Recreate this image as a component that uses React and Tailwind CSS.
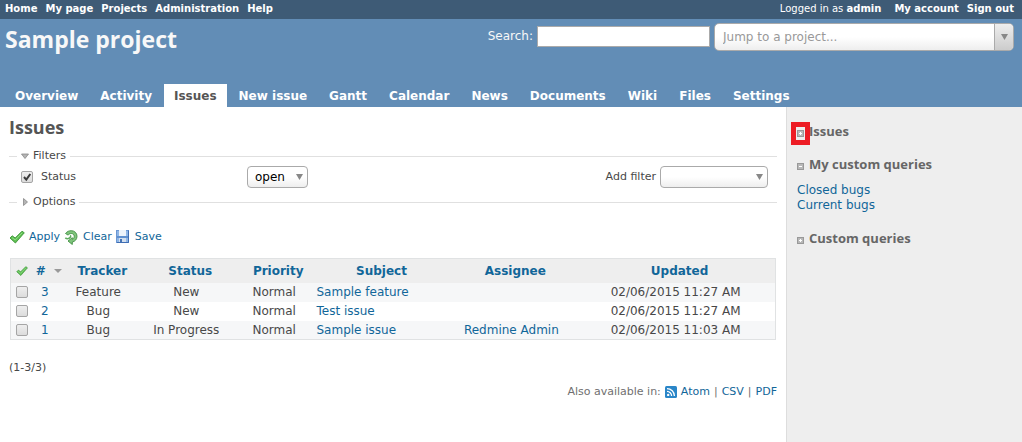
import React, { useState } from "react";

const topLinks = ["Home", "My page", "Projects", "Administration", "Help"];
const tabs = [
  "Overview", "Activity", "Issues", "New issue", "Gantt", "Calendar",
  "News", "Documents", "Wiki", "Files", "Settings",
];
const issues = [
  { id: 3, tracker: "Feature", status: "New", subject: "Sample feature", assignee: "", updated: "02/06/2015 11:27 AM" },
  { id: 2, tracker: "Bug", status: "New", subject: "Test issue", assignee: "", updated: "02/06/2015 11:27 AM" },
  { id: 1, tracker: "Bug", status: "In Progress", subject: "Sample issue", assignee: "Redmine Admin", updated: "02/06/2015 11:03 AM" },
];

function CheckMark({ className }) {
  return (
    <svg viewBox="0 0 16 16" className={className} aria-hidden="true">
      <path d="M1 9 3.2 6.800l3 2.200L13 2.200l2.300 1.600L6.400 14z" fill="#5fc052" stroke="#3c9438" strokeWidth="0.9" strokeLinejoin="round" />
      <path d="M3 8.600l3.200 2.400 7-7.200" fill="none" stroke="#97dc8d" strokeWidth="0.9" />
    </svg>
  );
}

function ReloadIcon() {
  return (
    <svg viewBox="0 0 16 16" className="size-4 shrink-0" aria-hidden="true">
      <path d="M2.500 4.500C4 2.500 6 1.700 8.200 1.700c3.500 0 5.800 2.500 5.800 5.600 0 3-2 5.200-4.700 5.700v2.500L5 12l4.300-3.300v1.600c1.200-.4 1.900-1.500 1.900-2.900 0-1.700-1.300-2.900-3-2.900-1.300 0-2.300.5-3 1.600z" fill="#7fc47c" stroke="#3f8f42" strokeWidth="0.9" strokeLinejoin="round" />
      <path d="M2.300 8.800c1.400 1.300 3.700 1.100 4.800-.2.700-.8.600-1.800 0-2.100" fill="none" stroke="#5fac60" strokeWidth="1.600" />
    </svg>
  );
}

function SaveIcon() {
  return (
    <svg viewBox="0 0 16 16" className="size-4 shrink-0" aria-hidden="true">
      <rect x="1.5" y="1.5" width="12" height="12" fill="#8fb6e6" stroke="#6b97d3" />
      <path d="M13.500 1.500v12H2" fill="none" stroke="#3f6db3" />
      <rect x="4" y="1" width="7" height="6" fill="#edf3fb" />
      <rect x="2" y="7" width="11" height="2" fill="#5f90d0" />
      <rect x="4" y="9" width="7" height="4" fill="#d3dfee" />
      <rect x="5" y="10" width="2" height="3" fill="#4674b5" />
    </svg>
  );
}

function FeedIcon() {
  return (
    <svg viewBox="0 0 12 12" className="size-3 shrink-0" aria-hidden="true">
      <rect width="12" height="12" rx="1.5" fill="#2a86c8" />
      <circle cx="3.200" cy="8.900" r="1.200" fill="#fff" />
      <path d="M2 5.400A4.600 4.600 0 0 1 6.600 10M2 2.600A7.400 7.400 0 0 1 9.400 10" fill="none" stroke="#fff" strokeWidth="1.300" />
    </svg>
  );
}

function ToggleBox({ plus }) {
  return (
    <svg viewBox="0 0 7 7" className="mt-1 size-[7px] shrink-0" aria-hidden="true">
      <rect x="0.5" y="0.5" width="6" height="6" fill="#b8b8b8" stroke="#999" />
      <path d={plus ? "M2 3.5h3M3.5 2v3" : "M2 3.5h3"} stroke="#fff" strokeWidth="1" />
    </svg>
  );
}

function DownArrow({ className }) {
  return (
    <svg viewBox="0 0 8 6" preserveAspectRatio="none" className={className} aria-hidden="true">
      <path d="M0 0h8L4 6z" fill="currentColor" />
    </svg>
  );
}

function Dropdown({ label, options, className }) {
  return (
    <span className={`relative inline-flex ${className}`}>
      <select
        aria-label={label}
        className="h-[22px] w-full appearance-none rounded border border-[#aaa] bg-linear-to-b from-white from-50% to-[#eee] pl-[7px] text-xs text-black"
      >
        {options.map((o) => <option key={o}>{o}</option>)}
      </select>
      <DownArrow className="pointer-events-none absolute top-2 right-[5px] h-[6px] w-[7px] text-[#888]" />
    </span>
  );
}

function Section({ title, open, onToggle, children }) {
  return (
    <fieldset className="border-t border-[#e0e0e0] pl-2">
      <legend className="px-1 text-[11px] leading-[14px]">
        <button type="button" aria-expanded={open} onClick={onToggle} className="flex items-center gap-1">
          <svg viewBox="0 0 8 8" className="size-2" aria-hidden="true">
            <path d={open ? "M0.5 2h7L4 6.500z" : "M2.500 0.500v7L6.500 4z"} fill="#b5b5b5" stroke="#888" strokeWidth="0.8" />
          </svg>
          {title}
        </button>
      </legend>
      {children}
    </fieldset>
  );
}

function SideHeading({ title, open, marked, onToggle }) {
  return (
    <h3 className="font-['Open_Sans',sans-serif] text-[13px] leading-4 font-bold text-[#666]">
      <button type="button" aria-expanded={open} onClick={onToggle} className="relative flex items-center gap-[5px]">
        <ToggleBox plus={!open} />
        {title}
        {marked && <span className="pointer-events-none absolute -top-px -left-1.5 h-[23px] w-[19px] border-5 border-[#ed1c24]" />}
      </button>
    </h3>
  );
}

const link = "text-[#169] hover:underline";
const box = "size-3 appearance-none rounded-xs border border-[#a5a5a5] bg-linear-to-b from-[#eee] to-[#dcdcdc]";

export default function App() {
  const [filters, setFilters] = useState(true);
  const [options, setOptions] = useState(false);
  const [issuesOpen, setIssuesOpen] = useState(false);
  const [mine, setMine] = useState(true);
  const [custom, setCustom] = useState(false);

  return (
    <div className="flex min-h-screen flex-col bg-white font-['DejaVu_Sans',Verdana,sans-serif] text-xs text-[#484848]">
      <div className="flex h-[19px] items-start justify-between bg-[#3e5b76] pr-2 pl-[5px] text-[10px] leading-[18px] font-bold text-white">
        <nav aria-label="Site" className="flex gap-2">
          {topLinks.map((t) => <a key={t} href="#">{t}</a>)}
        </nav>
        <div className="flex gap-2">
          <span className="pr-[5px] font-normal">Logged in as <a href="#" className="font-bold">admin</a></span>
          <a href="#">My account</a>
          <a href="#">Sign out</a>
        </div>
      </div>

      <header className="flex h-[88px] flex-col justify-between bg-[#628db6] text-[#f8f8f8]">
        <div className="flex justify-between pt-1 pr-2 pl-[5px]">
          <h1 className="font-['Open_Sans',sans-serif] text-[23px] leading-8 font-bold">Sample project</h1>
          <div className="flex items-start gap-1">
            <label htmlFor="q" className="pt-1 leading-[18px]"><a href="#">Search</a>:</label>
            <input id="q" type="text" className="mt-[3px] h-[21px] w-[173px] border border-[#aaa] bg-white px-1 text-black" />
            <span className="relative flex">
              <select aria-label="Jump to a project" className="h-7 w-[300px] appearance-none rounded-[5px] border border-[#aaa] bg-linear-to-b from-white from-50% to-[#eee] pl-2 text-xs text-[#999]">
                <option>Jump to a project...</option>
              </select>
              <span className="pointer-events-none absolute inset-y-px right-px flex w-[19px] items-center justify-center rounded-r border-l border-[#aaa] bg-linear-to-b from-[#eee] to-[#ccc] text-[#888]">
                <DownArrow className="h-[6px] w-[7px]" />
              </span>
            </span>
          </div>
        </div>
        <nav aria-label="Project" className="flex gap-0.5 pl-[5px] text-xs font-bold">
          {tabs.map((t) => (
            <a key={t} href="#" className={t === "Issues" ? "bg-white px-2.5 pt-1 pb-[3px] leading-4 text-[#555]" : "px-2.5 pt-1 pb-[3px] leading-4 text-white"}>{t}</a>
          ))}
        </nav>
      </header>

      <div className="flex grow">
        <main className="min-w-0 grow px-[9px] pt-2">
          <h2 className="font-['Open_Sans',sans-serif] text-lg leading-6 font-bold text-[#555]">Issues</h2>
          <form onSubmit={(e) => e.preventDefault()} className="pt-[10px]">
            <Section title="Filters" open={filters} onToggle={() => setFilters(!filters)}>
              {filters && (
                <div className="flex h-8 items-start justify-between pt-[3px] pr-[9px] text-[11px]">
                  <div className="flex w-[291px] justify-between">
                    <span className="flex items-center gap-2 pl-1">
                      <span className="relative flex">
                        <input id="status" type="checkbox" defaultChecked className={`peer ${box}`} />
                        <svg viewBox="0 0 12 12" className="pointer-events-none absolute inset-0 hidden size-3 peer-checked:block" aria-hidden="true">
                          <path d="M3 6l2.300 2.600L9.300 3" fill="none" stroke="#3b3b3b" strokeWidth="2" />
                        </svg>
                      </span>
                      <label htmlFor="status">Status</label>
                    </span>
                    <Dropdown label="Status filter" options={["open"]} className="w-[61px]" />
                  </div>
                  <div className="flex items-center gap-1">
                    <span>Add filter</span>
                    <Dropdown label="Add filter" options={[""]} className="w-[108px]" />
                  </div>
                </div>
              )}
            </Section>
            <Section title="Options" open={options} onToggle={() => setOptions(!options)} />
            <div className="flex gap-[3px] pt-5 text-[11px] leading-4">
              <a href="#" className="flex gap-1 text-[#169]"><CheckMark className="size-4" />Apply</a>
              <a href="#" className="flex gap-1 text-[#169]"><ReloadIcon />Clear</a>
              <a href="#" className="flex gap-1 text-[#169]"><SaveIcon />Save</a>
            </div>
          </form>

          <div className="px-px pt-[13px]">
            <table className="w-full table-fixed border-collapse border border-[#e0e2e3] text-center leading-4 whitespace-nowrap">
              <colgroup>
                <col className="w-[3%]" />
                <col className="w-[4%]" />
                <col className="w-[10%]" />
                <col className="w-[13%]" />
                <col className="w-[10%]" />
                <col className="w-[17%]" />
                <col className="w-[18%]" />
                <col className="w-[25%]" />
              </colgroup>
              <thead className="bg-[#eee] text-[#169]">
                <tr className="h-6">
                  <th><CheckMark className="mx-auto size-3" /></th>
                  <th><a href="#" className="flex items-center justify-center gap-2"># <DownArrow className="h-1 w-2 shrink-0 text-[#999]" /></a></th>
                  {["Tracker", "Status", "Priority", "Subject", "Assignee", "Updated"].map((h) => <th key={h}><a href="#">{h}</a></th>)}
                </tr>
              </thead>
              <tbody>
                {issues.map((r) => (
                  <tr key={r.id} className="h-[19px] odd:bg-[#f6f7f8]">
                    <td><input type="checkbox" aria-label={`Select issue ${r.id}`} className={`mx-auto block ${box} checked:bg-[#666]`} /></td>
                    <td className="pr-2"><a href="#" className={link}>{r.id}</a></td>
                    <td className="pr-2">{r.tracker}</td>
                    <td className="pr-2">{r.status}</td>
                    <td className="pr-2">Normal</td>
                    <td className="text-left"><a href="#" className={link}>{r.subject}</a></td>
                    <td className="pr-2">{r.assignee && <a href="#" className={link}>{r.assignee}</a>}</td>
                    <td className="pr-2">{r.updated}</td>
                  </tr>
                ))}
              </tbody>
            </table>
          </div>
          <p className="pt-5 text-[11px] leading-4">(1-3/3)</p>
          <p className="flex items-center justify-end gap-1 pt-2 text-[11px] leading-4 text-[#707070]">
            Also available in: <FeedIcon /> <a href="#" className={link}>Atom</a> | <a href="#" className={link}>CSV</a> | <a href="#" className={link}>PDF</a>
          </p>
        </main>

        <aside className="w-[236px] shrink-0 border-l border-[#ddd] bg-[#eee] px-2.5 pt-4">
          <SideHeading title="Issues" open={issuesOpen} marked onToggle={() => setIssuesOpen(!issuesOpen)} />
          <div className="pt-[17px]">
            <SideHeading title="My custom queries" open={mine} onToggle={() => setMine(!mine)} />
            {mine && (
              <ul className="pt-[11px] leading-[15px]">
                <li><a href="#" className={link}>Closed bugs</a></li>
                <li><a href="#" className={link}>Current bugs</a></li>
              </ul>
            )}
          </div>
          <div className="pt-[17px]">
            <SideHeading title="Custom queries" open={custom} onToggle={() => setCustom(!custom)} />
          </div>
        </aside>
      </div>
    </div>
  );
}
